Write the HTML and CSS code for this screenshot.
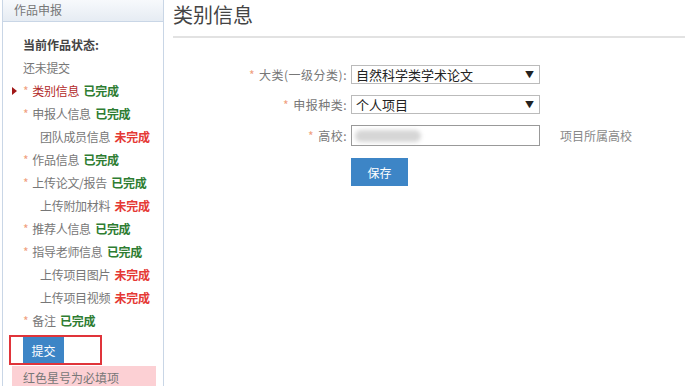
FILE: index.html
```html
<!DOCTYPE html>
<html lang="zh">
<head>
    <meta charset="UTF-8">
    <title>类别信息</title>
    <link rel="stylesheet" href="styles.css">
</head>
<body>
    <div class="page">
        <div class="sidebar">
            <div class="side-head">作品申报</div>
            <div class="side-body">
                <div class="status-title">当前作品状态:</div>
                <div class="item plain">还未提交</div>
                <div class="item active"><span class="arrow"></span><span class="star">*</span>类别信息 <b class="ok">已完成</b></div>
                <div class="item"><span class="star">*</span>申报人信息 <b class="ok">已完成</b></div>
                <div class="item sub">团队成员信息 <b class="no">未完成</b></div>
                <div class="item"><span class="star">*</span>作品信息 <b class="ok">已完成</b></div>
                <div class="item"><span class="star">*</span>上传论文/报告 <b class="ok">已完成</b></div>
                <div class="item sub">上传附加材料 <b class="no">未完成</b></div>
                <div class="item"><span class="star">*</span>推荐人信息 <b class="ok">已完成</b></div>
                <div class="item"><span class="star">*</span>指导老师信息 <b class="ok">已完成</b></div>
                <div class="item sub">上传项目图片 <b class="no">未完成</b></div>
                <div class="item sub">上传项目视频 <b class="no">未完成</b></div>
                <div class="item"><span class="star">*</span>备注 <b class="ok">已完成</b></div>
                <div class="submit-box"><button class="submit-btn">提交</button></div>
                <div class="note">红色星号为必填项</div>
            </div>
        </div>
        <div class="main">
            <h1>类别信息</h1>
            <div class="form">
                <div class="row">
                    <label><span class="star">*</span>大类(一级分类):</label>
                    <div class="select">自然科学类学术论文<span class="caret">▼</span></div>
                </div>
                <div class="row">
                    <label><span class="star">*</span>申报种类:</label>
                    <div class="select">个人项目<span class="caret">▼</span></div>
                </div>
                <div class="row">
                    <label><span class="star">*</span>高校:</label>
                    <div class="input"><span class="blur"></span></div>
                    <span class="hint">项目所属高校</span>
                </div>
                <div class="row">
                    <label></label>
                    <button class="save-btn">保存</button>
                </div>
            </div>
        </div>
    </div>
</body>
</html>
```
FILE: styles.css
```css
body {
    margin: 0;
    font-family: "Noto Sans CJK SC", "Liberation Sans", sans-serif;
    font-size: 12px;
    color: #666;
    background-color: #ffffff;
}
.page {
    display: flex;
    height: 386px;
    overflow: hidden;
}
.sidebar {
    width: 160px;
    margin-left: 2px;
    border-left: 1px solid #c9d6e6;
    border-right: 1px solid #c9d6e6;
    flex-shrink: 0;
}
.side-head {
    height: 21px;
    line-height: 20px;
    padding-left: 11px;
    color: #777;
    font-size: 12px;
    background: linear-gradient(#f7f9fc, #e6ecf3);
    border-bottom: 1px solid #c9d6e6;
}
.side-body {
    padding-top: 11px;
}
.status-title {
    padding-left: 20px;
    height: 23px;
    line-height: 23px;
    font-weight: bold;
    color: #444;
}
.item {
    position: relative;
    padding-left: 20px;
    height: 23px;
    line-height: 23px;
    color: #777;
    white-space: nowrap;
    letter-spacing: -0.3px;
}
.item.sub {
    padding-left: 37px;
}
.item.active {
    color: #b22a2a;
}
.star {
    color: #f0a080;
    margin-right: 4px;
}
.arrow {
    position: absolute;
    left: 9px;
    top: 8px;
    border-left: 5px solid #a01818;
    border-top: 4px solid transparent;
    border-bottom: 4px solid transparent;
}
.ok {
    color: #2e7d32;
    margin-left: 2px;
}
.no {
    color: #e53935;
    margin-left: 2px;
}
.submit-box {
    margin: 3px 0 0 6px;
    width: 89px;
    height: 26px;
    border: 2px solid #e0343a;
}
.submit-btn {
    margin-left: 12px;
    width: 41px;
    height: 26px;
    border: none;
    background-color: #3d85c6;
    color: #fff;
    font-family: inherit;
    font-size: 12px;
    padding: 0;
}
.note {
    margin: 1px 7px 0 9px;
    height: 24px;
    line-height: 24px;
    padding-left: 11px;
    background-color: #fcd0d4;
    color: #777;
}
.main {
    flex: 1;
    padding-left: 9px;
}
h1 {
    margin: 0;
    font-size: 20px;
    font-weight: normal;
    color: #444;
    height: 36px;
    line-height: 29px;
    border-bottom: 2px solid #e2e2e2;
}
.form {
    padding-top: 27px;
}
.row {
    display: flex;
    align-items: center;
    margin-bottom: 11px;
}
.row label {
    width: 174px;
    text-align: right;
    padding-right: 4px;
    color: #777;
    letter-spacing: 0.5px;
}
.select {
    position: relative;
    width: 183px;
    height: 17px;
    line-height: 17px;
    padding-left: 4px;
    border: 1px solid #bbb;
    font-size: 13px;
    color: #222;
}
.caret {
    position: absolute;
    right: 5px;
    top: 0;
    font-size: 9px;
}
.input {
    width: 187px;
    height: 19px;
    border: 1px solid #999;
    display: flex;
    align-items: center;
}
.blur {
    width: 66px;
    height: 12px;
    margin-left: 3px;
    border-radius: 6px;
    background-color: #d6d6d6;
    filter: blur(2px);
}
.hint {
    margin-left: 20px;
    color: #888;
}
.save-btn {
    margin-top: 1px;
    width: 57px;
    height: 28px;
    border: none;
    background-color: #3d85c6;
    color: #fff;
    font-family: inherit;
    font-size: 12px;
}
```
